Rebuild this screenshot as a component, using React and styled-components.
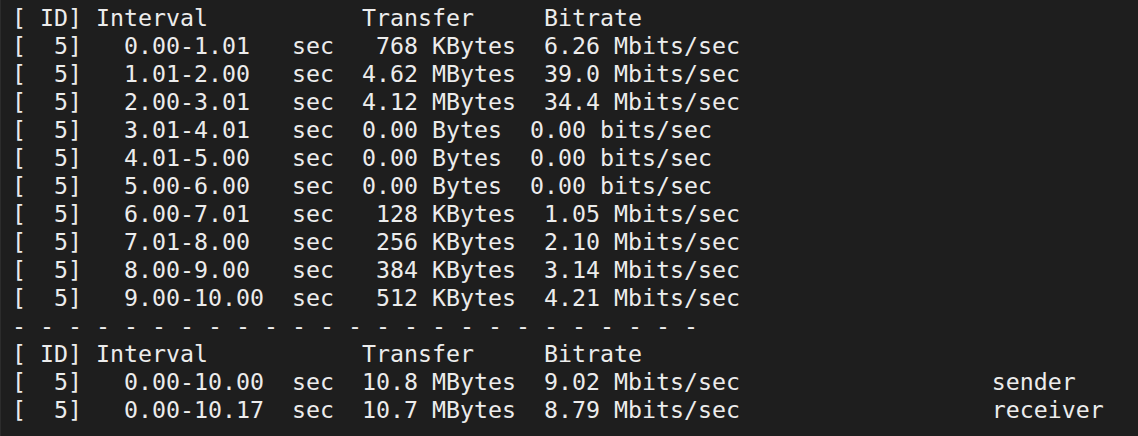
import React from 'react';
import styled, { createGlobalStyle } from 'styled-components';

const Global = createGlobalStyle`
  html, body {
    margin: 0;
    padding: 0;
    background: #1e1e1e;
  }
`;

const Terminal = styled.div`
  width: 1138px;
  height: 436px;
  box-sizing: border-box;
  background: #1e1e1e;
  border-left: 1px solid #2c2c2c;
  padding: 4px 0 0 11px;
  overflow: hidden;
  font-family: "DejaVu Sans Mono", "Liberation Mono", monospace;
  font-size: 23.26px;
  line-height: 28px;
  color: #ececec;
`;

const Line = styled.div`
  white-space: pre;
  height: 28px;
`;

const rows = [
  ['0.00-1.01', '  768 KBytes', '6.26 Mbits/sec'],
  ['1.01-2.00', ' 4.62 MBytes', '39.0 Mbits/sec'],
  ['2.00-3.01', ' 4.12 MBytes', '34.4 Mbits/sec'],
  ['3.01-4.01', ' 0.00 Bytes', '0.00 bits/sec'],
  ['4.01-5.00', ' 0.00 Bytes', '0.00 bits/sec'],
  ['5.00-6.00', ' 0.00 Bytes', '0.00 bits/sec'],
  ['6.00-7.01', '  128 KBytes', '1.05 Mbits/sec'],
  ['7.01-8.00', '  256 KBytes', '2.10 Mbits/sec'],
  ['8.00-9.00', '  384 KBytes', '3.14 Mbits/sec'],
  ['9.00-10.00', '  512 KBytes', '4.21 Mbits/sec'],
];

const summary = [
  ['0.00-10.00', ' 10.8 MBytes', '9.02 Mbits/sec', 'sender'],
  ['0.00-10.17', ' 10.7 MBytes', '8.79 Mbits/sec', 'receiver'],
];

const header = '[ ID] Interval           Transfer     Bitrate';

const fmt = (interval, transfer, rate) =>
  `[  5]   ${interval.padEnd(11)} sec ${transfer}  ${rate}`;

const App = () => {
  return (
    <>
      <Global />
      <Terminal>
        <Line>{header}</Line>
        {rows.map((r, i) => (
          <Line key={i}>{fmt(r[0], r[1], r[2])}</Line>
        ))}
        <Line>{Array(25).fill('-').join(' ')}</Line>
        <Line>{header}</Line>
        {summary.map((r, i) => (
          <Line key={i}>{fmt(r[0], r[1], r[2]).padEnd(70) + r[3]}</Line>
        ))}
      </Terminal>
    </>
  );
};

export default App;
